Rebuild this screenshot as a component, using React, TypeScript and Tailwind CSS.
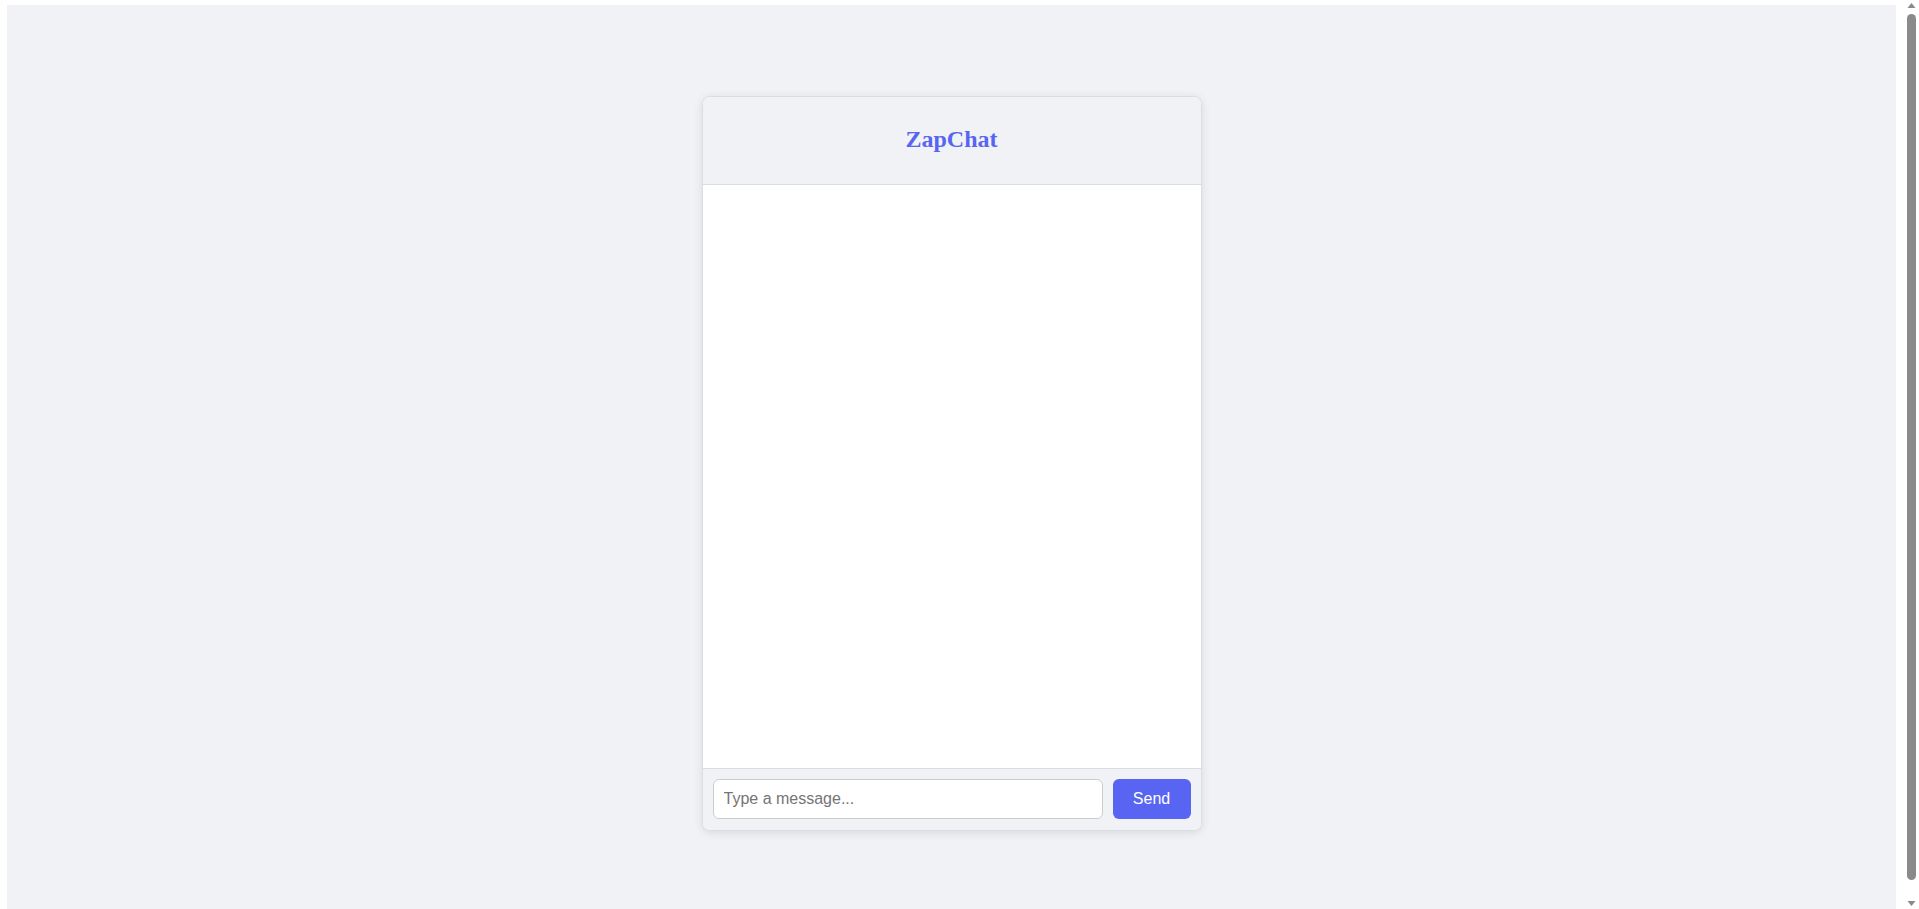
export default function App() {
  return (
    <div className="h-screen overflow-hidden flex bg-white">
      <div className="flex-1 pt-[5px] pl-[7px] pr-[8px]">
        <div className="h-[920px] bg-[#f0f2f5] flex justify-center pt-[91px]">
          <div className="w-[500px] h-[735px] flex flex-col bg-white border border-[#dcdde0] rounded-lg shadow-[0_2px_10px_rgba(0,0,0,0.1)] overflow-hidden">
            <header className="h-[88px] shrink-0 flex items-center justify-center bg-[#f0f2f5] border-b border-[#dcdde0]">
              <h1 className="mb-[4px] text-[24px] font-bold text-[#5865f2] font-['Liberation_Serif',serif] leading-none">
                ZapChat
              </h1>
            </header>
            <div className="flex-1 bg-white" />
            <div className="shrink-0 flex gap-[10px] pt-[10px] px-[10px] pb-[11px] bg-[#f0f2f5] border-t border-[#dcdde0]">
              <input
                type="text"
                placeholder="Type a message..."
                className="flex-1 h-10 px-[10px] bg-white border border-[#ccc] rounded-md text-base text-gray-800 placeholder-[#757575] font-['Liberation_Sans',Arial,sans-serif] outline-none"
              />
              <button className="w-[78px] h-10 rounded-md bg-[#5865f2] text-white text-base font-['Liberation_Sans',Arial,sans-serif]">
                Send
              </button>
            </div>
          </div>
        </div>
      </div>
      {/* browser scrollbar */}
      <div className="w-[15px] shrink-0 h-screen flex flex-col items-center bg-white">
        <svg width="15" height="12" viewBox="0 0 15 12" className="shrink-0">
          <path d="M3.5 8 L7.5 3 L11.5 8 Z" fill="#8a8a8a" />
        </svg>
        <div className="w-[9px] h-[866px] mt-[2px] rounded-full bg-[#8a8a8a]" />
        <div className="flex-1" />
        <svg width="15" height="12" viewBox="0 0 15 12" className="shrink-0">
          <path d="M3.5 4 L11.5 4 L7.5 9 Z" fill="#8a8a8a" />
        </svg>
      </div>
    </div>
  )
}
